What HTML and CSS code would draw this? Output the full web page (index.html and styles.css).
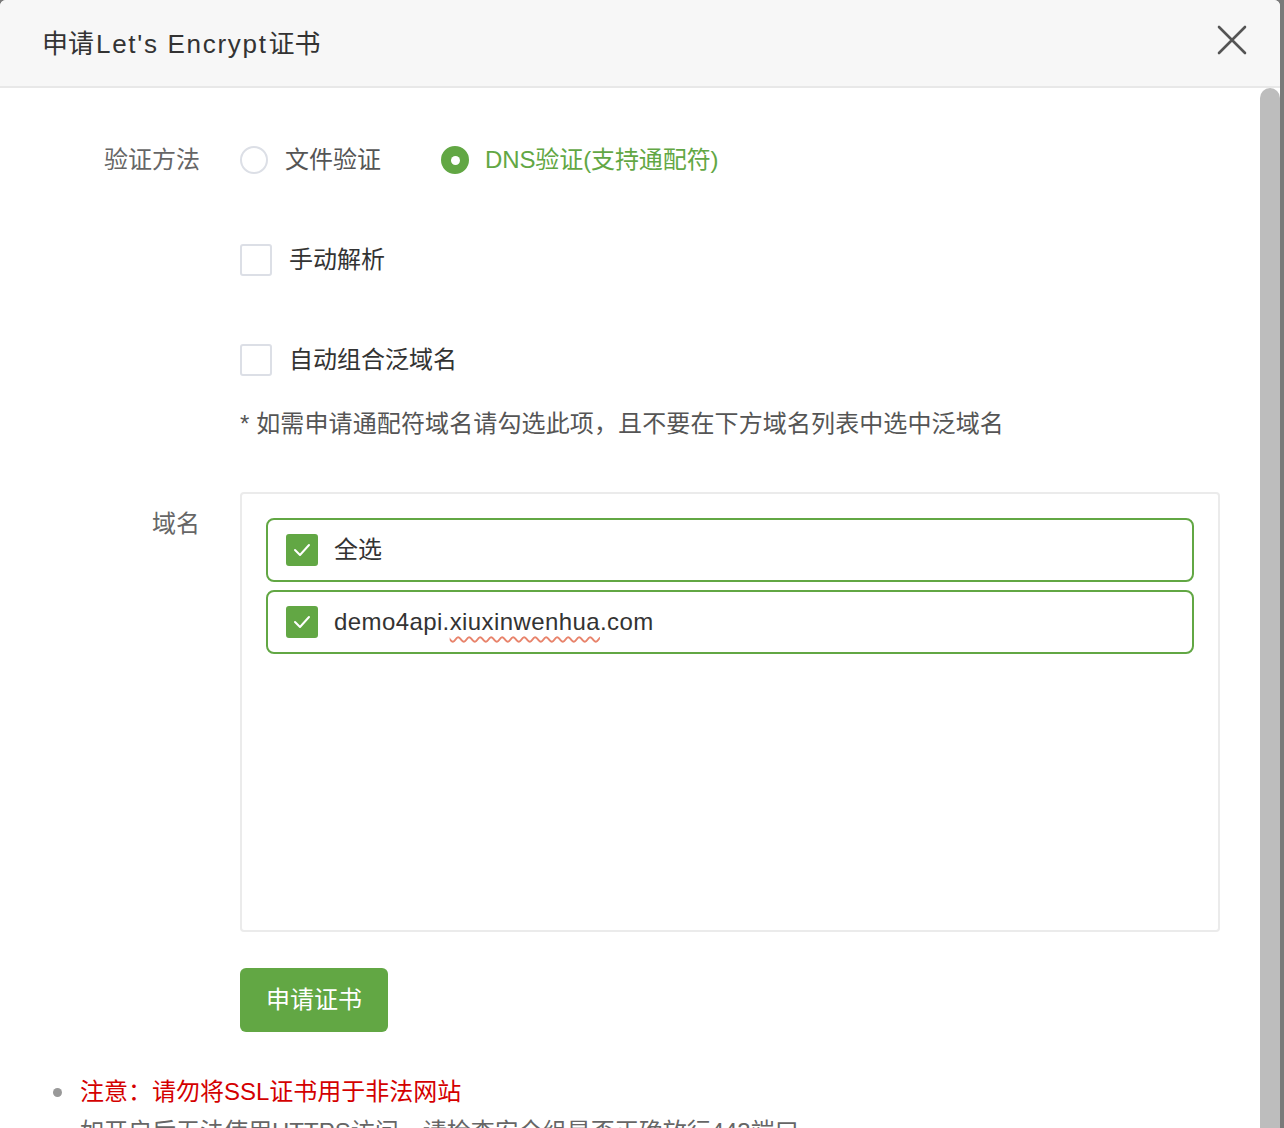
FILE: index.html
```html
<!DOCTYPE html>
<html lang="zh-CN">
<head>
<meta charset="utf-8">
<title>申请Let's Encrypt证书</title>
<link rel="stylesheet" href="styles.css">
</head>
<body>
<div class="page">
  <div class="modal">
    <div class="header">
      <span class="title">申请<span class="title-latin">Let's Encrypt</span>证书</span>
      <button class="close" aria-label="关闭">
        <svg width="32" height="32" viewBox="0 0 32 32"><path d="M3 3 L29 29 M29 3 L3 29" stroke="#555" stroke-width="2.6" stroke-linecap="round" fill="none"/></svg>
      </button>
    </div>
    <div class="body">
      <div class="content">
        <div class="row row-method">
          <div class="label">验证方法</div>
          <div class="field radios">
            <label class="radio"><span class="radio-circle"></span><span class="radio-text">文件验证</span></label>
            <label class="radio checked"><span class="radio-circle"></span><span class="radio-text">DNS验证(支持通配符)</span></label>
          </div>
        </div>
        <div class="row row-check">
          <div class="label"></div>
          <div class="field"><label class="check"><span class="box"></span><span>手动解析</span></label></div>
        </div>
        <div class="row row-check">
          <div class="label"></div>
          <div class="field"><label class="check"><span class="box"></span><span>自动组合泛域名</span></label></div>
        </div>
        <div class="row row-note">
          <div class="label"></div>
          <div class="field note">* 如需申请通配符域名请勾选此项，且不要在下方域名列表中选中泛域名</div>
        </div>
        <div class="row row-domain">
          <div class="label label-top">域名</div>
          <div class="field">
            <div class="domain-box">
              <label class="domain-item"><span class="box checked"><svg width="20" height="16" viewBox="0 0 20 16"><path d="M3 8 L8 13 L17 3" stroke="#fff" stroke-width="2" fill="none" stroke-linecap="round" stroke-linejoin="round"/></svg></span><span>全选</span></label>
              <label class="domain-item"><span class="box checked"><svg width="20" height="16" viewBox="0 0 20 16"><path d="M3 8 L8 13 L17 3" stroke="#fff" stroke-width="2" fill="none" stroke-linecap="round" stroke-linejoin="round"/></svg></span><span class="domain-text">demo4api.<span class="spell">xiuxinwenhua</span>.com</span></label>
            </div>
          </div>
        </div>
        <div class="row row-btn">
          <div class="label"></div>
          <div class="field"><button class="btn">申请证书</button></div>
        </div>
        <ul class="help">
          <li class="warn">注意：请勿将SSL证书用于非法网站</li>
          <li>如开启后无法使用HTTPS访问，请检查安全组是否正确放行443端口</li>
        </ul>
      </div>
      <div class="scrollbar"><div class="thumb"></div></div>
    </div>
  </div>
  <div class="backdrop"></div>
</div>
</body>
</html>
```
FILE: styles.css
```css
* { box-sizing: border-box; }
html, body {
  margin: 0;
  padding: 0;
  background: #7a7a7a;
  font-family: "Liberation Sans", "Noto Sans CJK SC", sans-serif;
  overflow: hidden;
}
.page {
  display: flex;
  width: 1284px;
  height: 1128px;
}
.modal {
  width: 1280px;
  height: 1128px;
  background: #fff;
  border-radius: 6px 6px 0 0;
  overflow: hidden;
  display: flex;
  flex-direction: column;
}
.backdrop {
  width: 4px;
  background: #7a7a7a;
}
.header {
  height: 88px;
  flex: none;
  background: #f7f7f7;
  border-bottom: 2px solid #e8e8e8;
  display: flex;
  align-items: center;
  justify-content: space-between;
  padding: 0 34px 0 42px;
}
.title {
  font-size: 26px;
  color: #333;
  margin-top: -3px;
}
.title-latin {
  letter-spacing: 1.7px;
  margin: 0 1px 0 2px;
}
.close {
  border: 0;
  background: transparent;
  padding: 0;
  width: 32px;
  height: 32px;
  margin-top: -6px;
  margin-right: -2px;
  display: flex;
}
.body {
  flex: 1;
  display: flex;
  min-height: 0;
}
.content {
  width: 1260px;
  padding: 52px 40px 0 0;
}
.scrollbar {
  width: 20px;
}
.thumb {
  width: 20px;
  height: 100%;
  background: #bdbdbd;
  border-radius: 10px 10px 0 0;
}
.row {
  display: flex;
  gap: 40px;
}
.label {
  width: 200px;
  flex: none;
  text-align: right;
  font-size: 24px;
  line-height: 40px;
  color: #666;
}
.field {
  flex: 1;
  font-size: 24px;
  line-height: 40px;
  color: #333;
}
.radios {
  display: flex;
  align-items: center;
  height: 40px;
}
.radio {
  display: flex;
  align-items: center;
  margin-right: 60px;
  color: #555;
}
.radio-circle {
  width: 28px;
  height: 28px;
  border: 2px solid #dcdfe6;
  border-radius: 50%;
  margin-right: 17px;
  display: flex;
  align-items: center;
  justify-content: center;
}
.radio.checked { color: #62a744; }
.radio.checked .radio-circle {
  background: #62a744;
  border-color: #62a744;
  margin-right: 16px;
}
.radio.checked .radio-text { letter-spacing: -0.1px; }
.radio.checked .radio-circle::after {
  content: "";
  width: 9px;
  height: 9px;
  background: #fff;
  border-radius: 50%;
}
.row-check { margin-top: 60px; }
.check {
  display: flex;
  align-items: center;
  height: 40px;
}
.box {
  width: 32px;
  height: 32px;
  flex: none;
  border: 2px solid #dcdfe6;
  border-radius: 3px;
  margin-right: 17px;
  background: #fff;
  display: flex;
  align-items: center;
  justify-content: center;
}
.box.checked {
  background: #62a744;
  border-color: #62a744;
  margin-right: 16px;
}
.row-note { margin-top: 24px; }
.note { color: #555; letter-spacing: 0.12px; }
.row-domain { margin-top: 48px; }
.label-top { padding-top: 12px; }
.domain-box {
  width: 980px;
  height: 440px;
  border: 2px solid #ebebeb;
  border-radius: 4px;
  padding: 24px 24px;
  display: flex;
  flex-direction: column;
  gap: 8px;
}
.domain-item {
  height: 64px;
  border: 2px solid #62a744;
  border-radius: 8px;
  display: flex;
  align-items: center;
  padding-left: 18px;
  color: #333;
}
.domain-text { letter-spacing: 0.4px; }
.spell {
  text-decoration: underline wavy #e8836b;
  text-decoration-thickness: 1.5px;
  text-underline-offset: 6px;
}
.row-btn { margin-top: 36px; }
.btn {
  width: 148px;
  height: 64px;
  border: 0;
  border-radius: 6px;
  background: #62a744;
  color: #fff;
  font-family: inherit;
  font-size: 24px;
  padding: 0 0 5px 0;
}
.help {
  margin: 40px 0 0 0;
  padding: 0 0 0 80px;
  list-style: none;
  font-size: 24px;
  line-height: 40px;
  color: #666;
}
.help li {
  position: relative;
}
.help li::before {
  content: "";
  position: absolute;
  left: -27px;
  top: 16px;
  width: 9px;
  height: 9px;
  border-radius: 50%;
  background: #999;
}
.help li.warn { color: #d40000; }
```
